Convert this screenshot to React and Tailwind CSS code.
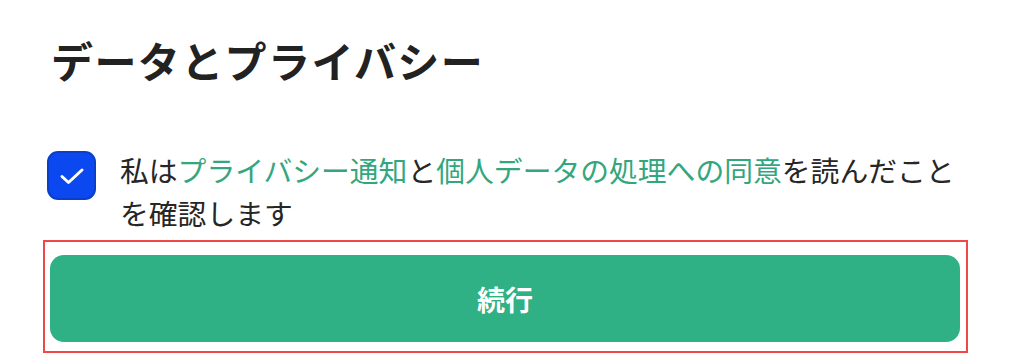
import React from "react";

export default function App() {
  return (
    <div
      className="w-[1022px] h-[360px] bg-white overflow-hidden text-[#222222]"
      style={{ fontFamily: '"Noto Sans CJK JP", "Noto Sans", sans-serif' }}
    >
      <div className="pl-[43px] pr-[54px] pt-[39px]">
        <h1 className="pl-[8px] text-[42px] leading-[42px] font-bold tracking-[1.4px]">
          データとプライバシー
        </h1>
        <div className="mt-[67px] flex items-start gap-[24px] pl-[4px]">
          <div className="mt-[3px] w-[49px] h-[49px] shrink-0 rounded-[11px] bg-[#0b48ef] border-2 border-[#0a3ecc] flex items-center justify-center">
            <svg width="26" height="18" viewBox="0 0 26 18" fill="none">
              <path
                d="M3 9.5 L9.5 15.5 L23 3"
                stroke="white"
                strokeWidth="3"
                strokeLinecap="round"
                strokeLinejoin="round"
              />
            </svg>
          </div>
          <p className="text-[28.8px] leading-[43.2px] text-[#262626]">
            私は<span className="text-[#34a67e]">プライバシー通知</span>と
            <span className="text-[#34a67e]">個人データの処理への同意</span>
            を読んだことを確認します
          </p>
        </div>
        <div className="mt-[6px] border-2 border-[#f04848] pt-[13px] pb-[9px] pl-[5px] pr-[6px]">
          <button className="w-full h-[87px] rounded-[14px] bg-[#2fb085] text-white text-[28px] font-bold flex items-center justify-center">
            続行
          </button>
        </div>
      </div>
    </div>
  );
}
